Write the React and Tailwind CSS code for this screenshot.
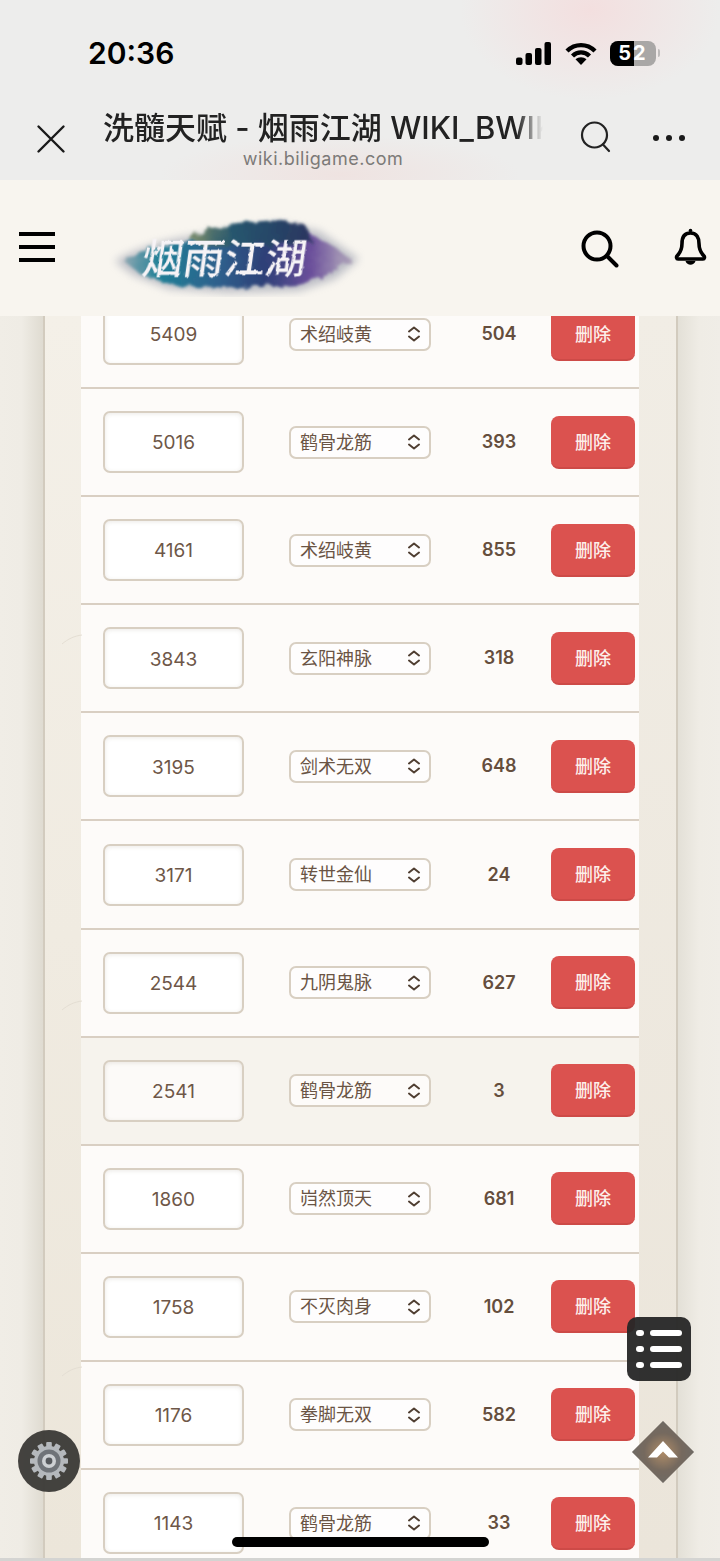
import { useId } from "react";

const ROWS = [
  ["5409", "术绍岐黄", "504"],
  ["5016", "鹤骨龙筋", "393"],
  ["4161", "术绍岐黄", "855"],
  ["3843", "玄阳神脉", "318"],
  ["3195", "剑术无双", "648"],
  ["3171", "转世金仙", "24"],
  ["2544", "九阴鬼脉", "627"],
  ["2541", "鹤骨龙筋", "3", true],
  ["1860", "岿然顶天", "681"],
  ["1758", "不灭肉身", "102"],
  ["1176", "拳脚无双", "582"],
  ["1143", "鹤骨龙筋", "33"],
];

const SANS = "font-['Inter','Noto_Sans_CJK_SC',sans-serif]";

function Chevrons() {
  return (
    <svg width="14" height="18" viewBox="0 0 14 18" fill="none" stroke="#4f3e31" strokeWidth="2" strokeLinecap="round" strokeLinejoin="round">
      <path d="M2 6.500 7 2.500l5 4" />
      <path d="M2 11.500 7 15.500l5-4" />
    </svg>
  );
}

function Row({ id, talent, qty, hover }) {
  return (
    <div className={`flex h-[108.1px] shrink-0 items-center border-b-2 border-[#d9cfc3] pl-[22px] ${hover ? "bg-[#f6f3ed]" : "bg-[#fdfbf9]"}`}>
      <div className={`flex h-[62px] w-[141px] shrink-0 items-center justify-center rounded-[7px] border-2 border-[#d8cfc2] pt-[3px] text-[19px] text-[#6e5748] shadow-[inset_0_1px_4px_rgba(90,70,50,0.12)] ${hover ? "bg-[#fcfaf8]" : "bg-white"}`}>
        {id}
      </div>
      <div className={`ml-[45px] flex h-[33px] w-[142px] shrink-0 items-center justify-between rounded-[7px] border-2 border-[#d8cfc2] pl-[9px] pr-[8px] text-[18px] text-[#6a5444] ${hover ? "bg-[#fdfbf9]" : "bg-white/60"}`}>
        <span>{talent}</span>
        <Chevrons />
      </div>
      <div className="ml-4 w-[104px] shrink-0 pb-[1px] text-center text-[18px] font-semibold text-[#654e3d]">{qty}</div>
      <div className="flex h-[53px] w-[84px] shrink-0 items-center justify-center rounded-[8px] border-b-2 border-[#cd4a47] bg-[#db524f] pt-[2px] text-[18px] font-medium text-[#fdeeea]">
        删除
      </div>
    </div>
  );
}

function StatusIcons() {
  return (
    <div className="flex items-center">
      <svg width="35" height="23" viewBox="0 0 35 23" fill="#000">
        <rect x="0" y="15.500" width="6.500" height="7.500" rx="2" />
        <rect x="9.500" y="11" width="6.500" height="12" rx="2" />
        <rect x="19" y="6" width="6.500" height="17" rx="2" />
        <rect x="28.500" y="0" width="6.500" height="23" rx="2" />
      </svg>
      <svg className="ml-[14px]" width="32" height="23" viewBox="0 0 32 23" fill="none" stroke="#000" strokeWidth="4.400">
        <path d="M2 9C10 1.200 22 1.200 30 9" />
        <path d="M7.500 14c5-4.800 12-4.800 17 0" />
        <path d="M16 23l-5.500-5.800c3-2.700 8-2.700 11 0z" fill="#000" stroke="none" />
      </svg>
      <div className="relative ml-[13px] flex h-[25px] w-[46px] overflow-hidden rounded-[8px] bg-[#a9a7a6] text-[20px] font-bold leading-[25px] text-white">
        <div className="h-full w-[24px] bg-black" />
        <div className="absolute inset-0 text-center tracking-[2px]">52</div>
      </div>
      <div className="ml-[2px] h-[8px] w-[2px] rounded-r-full bg-[#a9a7a6]/70" />
    </div>
  );
}

function Logo() {
  const uid = useId().replace(/[^a-zA-Z0-9]/g, "");
  return (
    <svg width="256" height="84" viewBox="0 0 256 84" className="shrink-0">
      <defs>
        <linearGradient id={`${uid}ink`} x1="0" x2="1" y1="0" y2="0">
          <stop offset="0" stopColor="#8fa8b2" />
          <stop offset="0.16" stopColor="#1f7f96" />
          <stop offset="0.42" stopColor="#2f5f8c" />
          <stop offset="0.62" stopColor="#2d4077" />
          <stop offset="0.82" stopColor="#6b4f9b" />
          <stop offset="1" stopColor="#b0a6ba" />
        </linearGradient>
        <linearGradient id={`${uid}top`} x1="0" x2="1" y1="0" y2="0">
          <stop offset="0" stopColor="#7f8f6a" />
          <stop offset="0.35" stopColor="#25566e" />
          <stop offset="1" stopColor="#2a3560" />
        </linearGradient>
        <filter id={`${uid}wash`} x="-10%" y="-20%" width="120%" height="140%">
          <feTurbulence type="fractalNoise" baseFrequency="0.09" numOctaves="3" seed="4" />
          <feDisplacementMap in="SourceGraphic" scale="10" />
          <feGaussianBlur stdDeviation="1.800" />
        </filter>
        <filter id={`${uid}haze`} x="-10%" y="-30%" width="120%" height="160%">
          <feGaussianBlur stdDeviation="4" />
        </filter>
        <filter id={`${uid}brush`} x="-5%" y="-10%" width="110%" height="120%">
          <feTurbulence type="fractalNoise" baseFrequency="0.25" numOctaves="2" seed="9" />
          <feDisplacementMap in="SourceGraphic" scale="2.500" />
        </filter>
      </defs>
      <path filter={`url(#${uid}haze)`} fill="#8d93a5" opacity="0.55" d="M6 48C30 34 60 26 90 22L170 10 210 18 250 46 226 66 190 78 120 80 60 76 24 62Z" />
      <path filter={`url(#${uid}wash)`} fill={`url(#${uid}ink)`} d="M14 47C38 37 58 31 84 27L112 20 170 12 200 20 222 32 242 46 218 62 190 72 130 75 62 72 30 60Z" />
      <path filter={`url(#${uid}wash)`} fill={`url(#${uid}top)`} d="M80 26 98 16 128 10 168 7 196 12 204 30 150 32 100 34Z" />
      <text x="26" y="60" fontSize="41" fontWeight="500" fill="#f6f3f6" filter={`url(#${uid}brush)`} transform="skewX(-8) translate(14 0)" fontFamily="'Noto Sans CJK SC',sans-serif">
        烟雨江湖
      </text>
    </svg>
  );
}

function Gear() {
  const teeth = Array.from({ length: 12 }, (_, i) => i * 30);
  return (
    <svg width="40" height="40" viewBox="0 0 40 40">
      {teeth.map((a) => (
        <rect key={a} x="17.200" y="1" width="5.600" height="7" rx="1" fill="#b4b8bc" transform={`rotate(${a} 20 20)`} />
      ))}
      <circle cx="20" cy="20" r="15" fill="#b4b8bc" />
      <circle cx="20" cy="20" r="11.500" fill="#6f7378" />
      <circle cx="20" cy="20" r="7" fill="#cdd0d3" />
      <circle cx="20" cy="20" r="3.400" fill="#55585c" />
    </svg>
  );
}

function SideSwirl() {
  return (
    <svg width="20" height="12" viewBox="0 0 20 12" fill="none" stroke="#e4ded3" strokeWidth="1">
      <path d="M0 10C6 5 12 2 20 1" />
    </svg>
  );
}

export default function App() {
  return (
    <div className={`relative flex h-[1561px] w-[720px] flex-col overflow-hidden bg-[#f5f2eb] ${SANS}`}>
      {/* browser chrome */}
      <div className="h-[180px] shrink-0 bg-[#ededec] bg-[radial-gradient(ellipse_130px_90px_at_590px_10px,#f3dfdf,transparent),radial-gradient(ellipse_180px_40px_at_340px_175px,#efe3e1,transparent)] pt-[36px]">
        <div className="flex h-[34px] items-center justify-between pl-[88px] pr-[60px]">
          <span className="text-[30px] font-semibold leading-none text-black">20:36</span>
          <StatusIcons />
        </div>
        <div className="mt-[39px] flex pl-[36px] pr-[35px]">
          <svg className="mt-[15px] shrink-0" width="30" height="30" viewBox="0 0 30 30" fill="none" stroke="#1a1a1a" strokeWidth="2.400" strokeLinecap="round">
            <path d="M2.500 2.500l25 25M27.500 2.500l-25 25" />
          </svg>
          <div className="ml-[37px] flex w-[440px] shrink-0 flex-col items-center">
            <div className="w-full overflow-hidden whitespace-nowrap text-[31px] font-medium leading-[38px] text-[#222] [mask-image:linear-gradient(to_right,#000_94%,transparent)]">
              洗髓天赋 - 烟雨江湖 WIKI_BWIK
            </div>
            <div className="mt-[1px] text-[18px] leading-[22px] tracking-[0.5px] text-[#7c7a78]">wiki.biligame.com</div>
          </div>
          <svg className="ml-[37px] mt-[12px] shrink-0" width="32" height="32" viewBox="0 0 32 32" fill="none" stroke="#222" strokeWidth="2.200" strokeLinecap="round">
            <circle cx="14.500" cy="14" r="12.500" />
            <path d="M23 23.500l6 6.500" />
          </svg>
          <div className="ml-[41px] mt-[26px] flex h-[6px] gap-[7px]">
            <div className="size-[6px] rounded-full bg-[#1a1a1a]" />
            <div className="size-[6px] rounded-full bg-[#1a1a1a]" />
            <div className="size-[6px] rounded-full bg-[#1a1a1a]" />
          </div>
        </div>
      </div>

      {/* site header */}
      <div className="flex h-[136px] shrink-0 items-center bg-[#f8f5ef] pl-[19px] pr-[13px]">
        <div className="-mt-[3px] flex h-[30px] w-[36px] shrink-0 flex-col justify-between">
          <div className="h-[4px] bg-black" />
          <div className="h-[4px] bg-black" />
          <div className="h-[4px] bg-black" />
        </div>
        <div className="ml-[54px] mt-[14px]">
          <Logo />
        </div>
        <svg className="ml-[216px] mt-[1px] shrink-0" width="38" height="38" viewBox="0 0 38 38" fill="none" stroke="#000" strokeWidth="4" strokeLinecap="round">
          <circle cx="16" cy="16" r="13.500" />
          <path d="M26 26l9.500 9.500" />
        </svg>
        <svg className="ml-[55px] -mt-[2px] shrink-0" width="33" height="38" viewBox="0 0 33 38" fill="none" stroke="#000" strokeWidth="3.600" strokeLinejoin="round">
          <path d="M16.500 5C10 5 8 10 8 15.500c0 6-1.500 9-5 12.500-.8.800-.6 3 1 3h25c1.600 0 1.800-2.200 1-3-3.500-3.500-5-6.500-5-12.500C25 10 23 5 16.500 5Z" />
          <circle cx="16.500" cy="2.500" r="1.800" fill="#000" stroke="none" />
          <path d="M11.500 33c1.500 5 8.500 5 10 0Z" fill="#000" stroke="none" />
        </svg>
      </div>

      {/* page body */}
      <div className="flex min-h-0 flex-1 border-b-[3px] border-[#d4d4d2]">
        <div className="w-[43px] shrink-0 bg-gradient-to-r from-[#f0ede6] via-[#efece5] to-[#dfdbd1]" />
        <div className="w-[2px] shrink-0 bg-[#d2cbbe]" />
        <div className="flex w-[36px] shrink-0 flex-col bg-gradient-to-b from-[#f4f0e8] to-[#ece6da]" />
        <div className="relative w-[558px] shrink-0 overflow-hidden">
          <div className="-mt-[35px] flex flex-col">
            {ROWS.map(([id, talent, qty, hover]) => (
              <Row key={id} id={id} talent={talent} qty={qty} hover={hover} />
            ))}
          </div>
        </div>
        <div className="w-[37px] shrink-0 bg-gradient-to-b from-[#f1ede5] to-[#ebe5da]" />
        <div className="w-[2px] shrink-0 bg-[#d2cbbe]" />
        <div className="flex-1 bg-gradient-to-r from-[#e3e0d7] via-[#efece5] to-[#f0ede7]" />
      </div>

      {/* floating stuff */}
      <div className="absolute left-[62px] top-[634px]"><SideSwirl /></div>
      <div className="absolute left-[62px] top-[1000px]"><SideSwirl /></div>
      <div className="absolute left-[62px] top-[1366px]"><SideSwirl /></div>

      <div className="absolute left-[18px] top-[1430px] flex size-[62px] items-center justify-center rounded-full bg-[#3a3936]/95">
        <Gear />
      </div>

      <div className="absolute left-[627px] top-[1317px] flex h-[64px] w-[64px] flex-col justify-center gap-[10px] rounded-[10px] bg-[#262626]/95 pl-[9px]">
        {[0, 1, 2].map((i) => (
          <div key={i} className="flex items-center gap-[6px]">
            <div className="h-[6px] w-[8px] rounded-full bg-white" />
            <div className="h-[6px] w-[32px] rounded-full bg-white" />
          </div>
        ))}
      </div>

      <div className="absolute left-[641px] top-[1430px] size-[44px] rotate-45 bg-[#6f675f] bg-[radial-gradient(circle_at_center,#b08d68,#75695e_60%,#6f6a64)] blur-[0.6px]" />
      <svg className="absolute left-[648px] top-[1441px]" width="30" height="17" viewBox="0 0 30 17" fill="#fff">
        <path d="M15 0 30 16.500H21L15 10.500 9 16.500H0Z" />
      </svg>

      <div className="absolute left-[232px] top-[1537px] h-[10px] w-[257px] rounded-full bg-black" />
    </div>
  );
}
